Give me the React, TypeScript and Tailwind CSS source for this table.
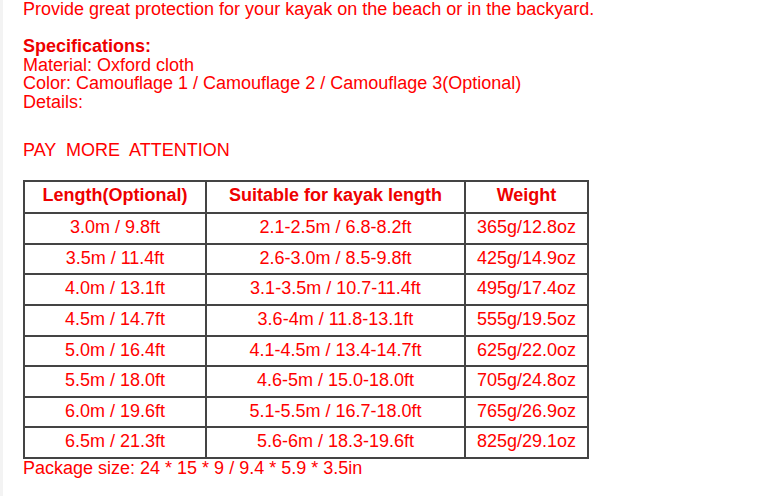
const rows = [
  ['3.0m / 9.8ft', '2.1-2.5m / 6.8-8.2ft', '365g/12.8oz'],
  ['3.5m / 11.4ft', '2.6-3.0m / 8.5-9.8ft', '425g/14.9oz'],
  ['4.0m / 13.1ft', '3.1-3.5m / 10.7-11.4ft', '495g/17.4oz'],
  ['4.5m / 14.7ft', '3.6-4m / 11.8-13.1ft', '555g/19.5oz'],
  ['5.0m / 16.4ft', '4.1-4.5m / 13.4-14.7ft', '625g/22.0oz'],
  ['5.5m / 18.0ft', '4.6-5m / 15.0-18.0ft', '705g/24.8oz'],
  ['6.0m / 19.6ft', '5.1-5.5m / 16.7-18.0ft', '765g/26.9oz'],
  ['6.5m / 21.3ft', '5.6-6m / 18.3-19.6ft', '825g/29.1oz'],
];

const cell = 'border-2 border-[#444] text-center align-middle p-0';

export default function App() {
  return (
    <div className="flex w-[782px] h-[496px] bg-white overflow-hidden font-['Liberation_Sans',Arial,sans-serif] text-[18px] leading-[18.6px] text-[#f00]">
      {/* left edge strip */}
      <div className="w-[3px] shrink-0 bg-[#f3f3f3]" />

      <div className="flex flex-col pl-[20px]">
        <p>Provide great protection for your kayak on the beach or in the backyard.</p>
        <p className="mt-[18.6px] font-bold text-[#e00]">Specifications:</p>
        <p>Material: Oxford cloth</p>
        <p>Color: Camouflage 1 / Camouflage 2 / Camouflage 3(Optional)</p>
        <p>Details:</p>
        <p className="mt-[29px] whitespace-pre">PAY  MORE  ATTENTION</p>

        <table className="mt-[21px] w-[564px] table-fixed border-collapse">
          <colgroup>
            <col className="w-[182px]" />
            <col className="w-[259px]" />
            <col className="w-[123px]" />
          </colgroup>
          <thead>
            <tr className="h-[32px] font-bold text-[#e00]">
              <th className={`${cell} pb-[3px]`}>Length(Optional)</th>
              <th className={`${cell} pb-[3px]`}>Suitable for kayak length</th>
              <th className={`${cell} pb-[3px]`}>Weight</th>
            </tr>
          </thead>
          <tbody>
            {rows.map((r, i) => (
              <tr key={i} className="h-[30.6px]">
                {r.map((c, j) => (
                  <td key={j} className={`${cell} pb-[2px]`}>{c}</td>
                ))}
              </tr>
            ))}
          </tbody>
        </table>

        <p>Package size: 24 * 15 * 9 / 9.4 * 5.9 * 3.5in</p>
      </div>
    </div>
  );
}
